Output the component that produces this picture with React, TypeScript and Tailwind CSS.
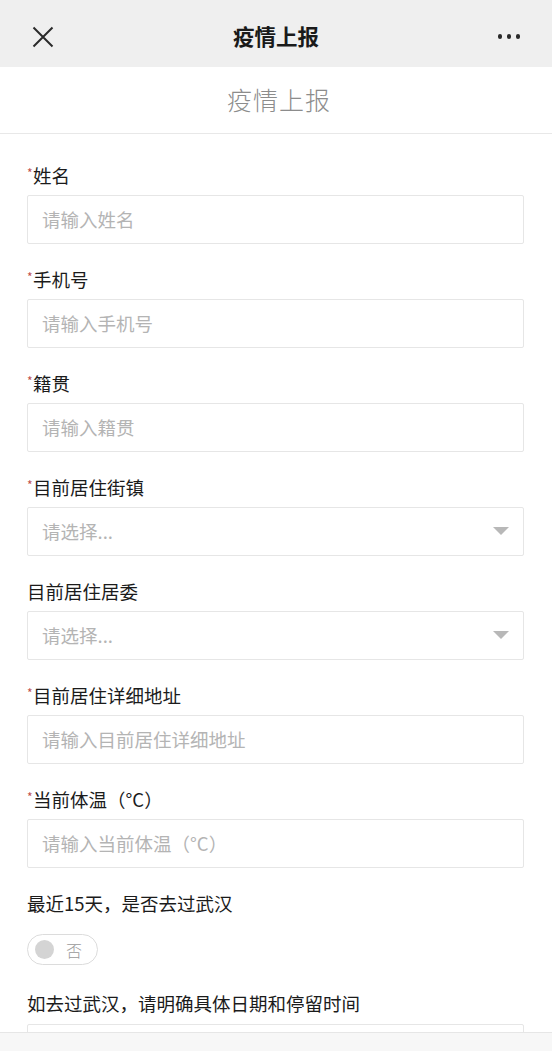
import React from "react";

const font = { fontFamily: '"Noto Sans CJK SC", "Noto Sans", sans-serif' };

function Label({ text, required }: { text: string; required?: boolean }) {
  return (
    <div className="flex items-start h-[24px] leading-[24px] text-[18.5px] text-[#1b1b1b]">
      {required ? (
        <span className="text-[12px] leading-[16px] text-[#c0504d] w-[6px] mt-[2px]">*</span>
      ) : null}
      <span>{text}</span>
    </div>
  );
}

function InputBox({ placeholder, select }: { placeholder: string; select?: boolean }) {
  return (
    <div className="mt-[8px] h-[49px] border border-[#e6e6e6] rounded-[2px] bg-white flex items-center pl-[14px] pr-[12px]">
      <span className="flex-1 text-[18.5px] text-[#b4b4b4]">{placeholder}</span>
      {select ? (
        <svg width="16" height="9" viewBox="0 0 16 9" className="mr-[2px]">
          <path d="M0 0 L16 0 L8 8 Z" fill="#b8b8b8" />
        </svg>
      ) : null}
    </div>
  );
}

export default function App() {
  const fields: { label: string; ph: string; req: boolean; select?: boolean }[] = [
    { label: "姓名", ph: "请输入姓名", req: true },
    { label: "手机号", ph: "请输入手机号", req: true },
    { label: "籍贯", ph: "请输入籍贯", req: true },
    { label: "目前居住街镇", ph: "请选择...", req: true, select: true },
    { label: "目前居住居委", ph: "请选择...", req: false, select: true },
    { label: "目前居住详细地址", ph: "请输入目前居住详细地址", req: true },
    { label: "当前体温（°C）", ph: "请输入当前体温（°C）", req: true },
  ];
  return (
    <div style={font} className="w-[552px] h-[1051px] overflow-hidden bg-white relative">
      <div className="h-[67px] bg-[#efefef] flex items-center justify-between px-[32px]">
        <svg width="22" height="22" viewBox="0 0 22 22" className="mt-[6px]">
          <path d="M1.5 1.5 L20.5 20.5 M20.5 1.5 L1.5 20.5" stroke="#2a2a2a" strokeWidth="2" />
        </svg>
        <div className="text-[21.5px] font-bold text-[#1a1a1a] mt-[5px]">疫情上报</div>
        <div className="flex gap-[5px] items-center mt-[5px] w-[22px] justify-end">
          <span className="block w-[5px] h-[5px] rounded-full bg-[#2a2a2a]" />
          <span className="block w-[5px] h-[5px] rounded-full bg-[#2a2a2a]" />
          <span className="block w-[5px] h-[5px] rounded-full bg-[#2a2a2a]" />
        </div>
      </div>
      <div className="h-[67px] border-b border-[#e8e8e8] flex items-center justify-center">
        <div className="text-[25px] font-light text-[#8c8c8c] tracking-[1px] ml-[6px]">疫情上报</div>
      </div>
      <div className="px-[27px] pt-[29px] pr-[28px]">
        {fields.map((f) => (
          <div key={f.label} className="mb-[23px]">
            <Label text={f.label} required={f.req} />
            <InputBox placeholder={f.ph} select={f.select} />
          </div>
        ))}
        <Label text="最近15天，是否去过武汉" />
        <div className="mt-[19px] w-[71px] h-[31px] rounded-full border border-[#dcdcdc] flex items-center pl-[7px]">
          <span className="block w-[19px] h-[19px] rounded-full bg-[#d4d4d4]" />
          <span className="ml-[12px] text-[16px] font-light text-[#9a9a9a] leading-none">否</span>
        </div>
        <div className="mt-[26px]">
          <Label text="如去过武汉，请明确具体日期和停留时间" />
          <div className="mt-[9px] h-[49px] border border-[#e6e6e6] rounded-[2px]" />
        </div>
      </div>
      <div className="absolute bottom-0 left-0 right-0 h-[19px] bg-[#f7f7f7] border-t border-[#e6e6e6]" />
    </div>
  );
}
